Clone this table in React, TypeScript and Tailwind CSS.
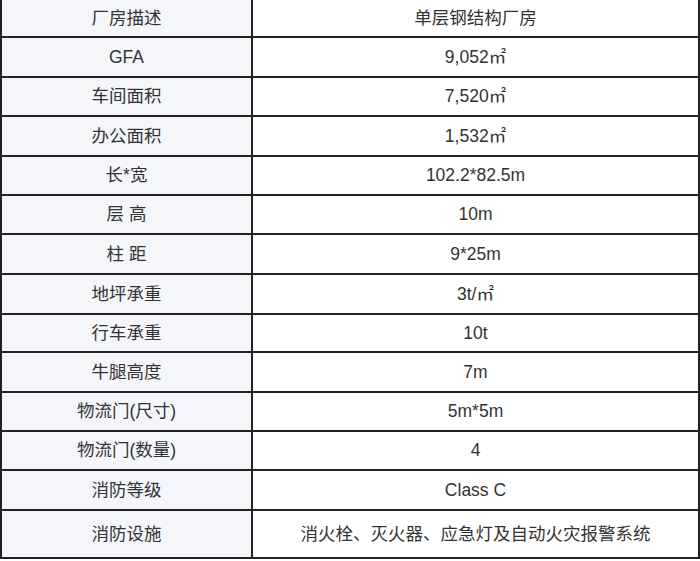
import React from 'react';

interface Row {
  label: string;
  value: string;
  h: number;
}

// row heights include the 2px bottom rule; first row is cut off at the top
const rows: Row[] = [
  { label: '厂房描述', value: '单层钢结构厂房', h: 38 },
  { label: 'GFA', value: '9,052㎡', h: 40 },
  { label: '车间面积', value: '7,520㎡', h: 39 },
  { label: '办公面积', value: '1,532㎡', h: 40 },
  { label: '长*宽', value: '102.2*82.5m', h: 39 },
  { label: '层 高', value: '10m', h: 39 },
  { label: '柱 距', value: '9*25m', h: 40 },
  { label: '地坪承重', value: '3t/㎡', h: 40 },
  { label: '行车承重', value: '10t', h: 38 },
  { label: '牛腿高度', value: '7m', h: 40 },
  { label: '物流门(尺寸)', value: '5m*5m', h: 39 },
  { label: '物流门(数量)', value: '4', h: 39 },
  { label: '消防等级', value: 'Class C', h: 40 },
  { label: '消防设施', value: '消火栓、灭火器、应急灯及自动火灾报警系统', h: 48 },
];

const App: React.FC = () => {
  return (
    <div
      className="w-[700px] h-[561px] bg-white overflow-hidden text-[17.5px] text-[#333]"
      style={{ fontFamily: '"Liberation Sans", "Noto Sans CJK SC", sans-serif' }}
    >
      <div className="flex flex-col">
        {rows.map((row) => (
          <div
            key={row.label}
            className="flex border-b-2 border-[#222] box-border"
            style={{ height: row.h }}
          >
            <div className="w-[253px] shrink-0 flex items-center justify-center bg-[#f4f6fa] border-l-2 border-r-2 border-[#222]">
              {row.label}
            </div>
            <div className="w-[447px] flex items-center justify-center bg-white border-r-2 border-[#222]">
              {row.value}
            </div>
          </div>
        ))}
      </div>
    </div>
  );
};

export default App;
